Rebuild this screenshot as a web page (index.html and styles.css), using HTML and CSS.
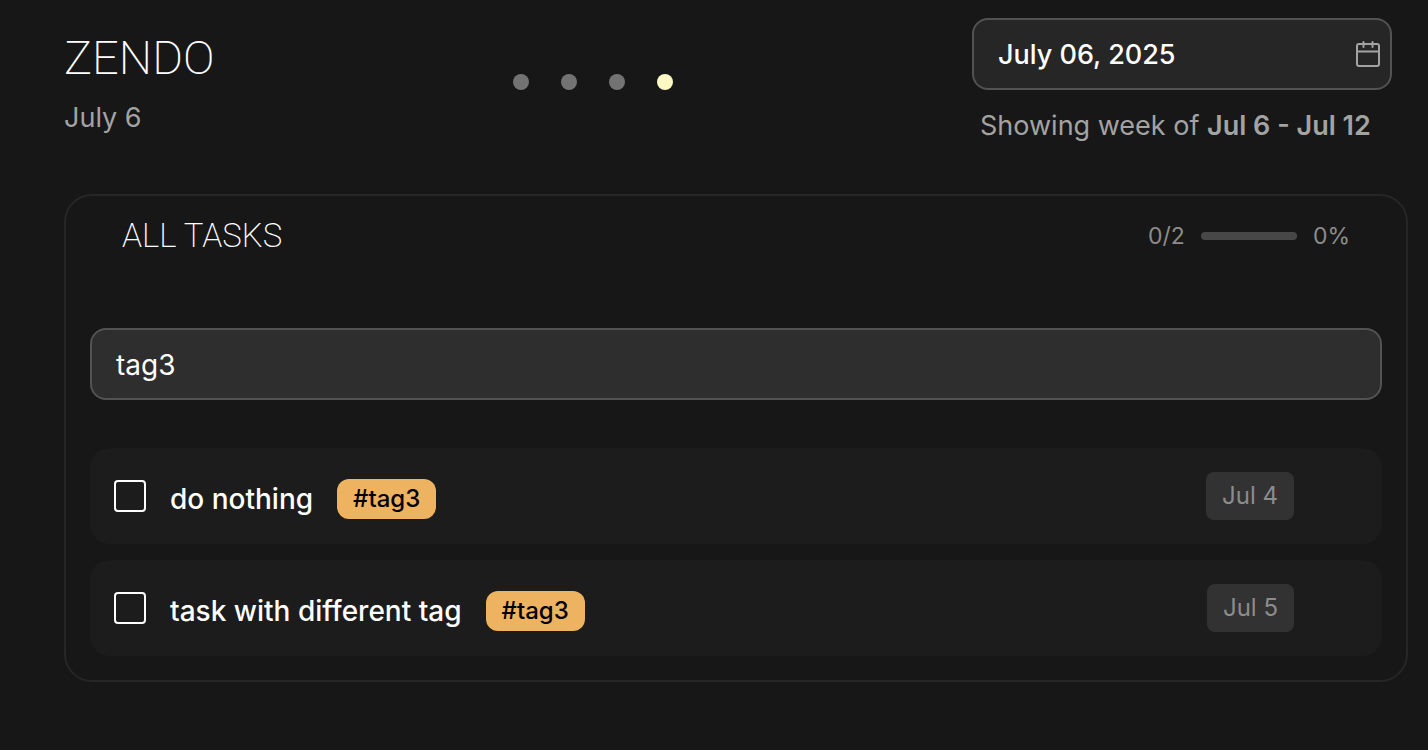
FILE: index.html
```html
<!DOCTYPE html>
<html lang="en">
<head>
<meta charset="utf-8">
<meta name="viewport" content="width=device-width, initial-scale=1">
<title>Zendo</title>
<link rel="stylesheet" href="styles.css">
</head>
<body>
<div class="page">
  <header class="top">
    <div class="brand">
      <h1 class="logo">ZENDO</h1>
      <p class="today">July 6</p>
    </div>
    <nav class="dots" aria-label="Views">
      <button class="dot" type="button" aria-label="View 1"></button>
      <button class="dot" type="button" aria-label="View 2"></button>
      <button class="dot" type="button" aria-label="View 3"></button>
      <button class="dot dot-active" type="button" aria-label="View 4" aria-current="true"></button>
    </nav>
    <div class="week">
      <div class="date-field">
        <input class="date-input" type="text" value="July 06, 2025" aria-label="Date">
        <button class="date-button" type="button" aria-label="Open calendar">
          <svg class="date-icon" viewBox="0 0 24 28" fill="none" stroke="currentColor" stroke-width="2" stroke-linecap="round" stroke-linejoin="round">
            <rect x="1" y="4" width="22" height="22" rx="2"/>
            <path d="M1 11.500h22M7.500 2v5M16.500 2v5"/>
          </svg>
        </button>
      </div>
      <p class="week-label">Showing week of <strong>Jul 6 - Jul 12</strong></p>
    </div>
  </header>

  <main class="card">
    <div class="card-head">
      <h2 class="card-title">ALL TASKS</h2>
      <div class="progress">
        <span>0/2</span>
        <div class="bar" role="progressbar" aria-label="Tasks done" aria-valuenow="0" aria-valuemin="0" aria-valuemax="100"></div>
        <span>0%</span>
      </div>
    </div>
    <input class="search" type="text" value="tag3" aria-label="Search tasks">
    <ul class="tasks">
      <li class="task">
        <input class="check" type="checkbox" id="task-1">
        <div class="task-text">
          <label class="name" for="task-1">do nothing</label>
          <span class="tag">#tag3</span>
        </div>
        <span class="due">Jul 4</span>
      </li>
      <li class="task">
        <input class="check" type="checkbox" id="task-2">
        <div class="task-text">
          <label class="name" for="task-2">task with different tag</label>
          <span class="tag">#tag3</span>
        </div>
        <span class="due">Jul 5</span>
      </li>
    </ul>
  </main>
</div>
</body>
</html>
```

FILE: styles.css
```css
* {
  box-sizing: border-box;
}

body {
  margin: 0;
  background: #171717;
  color: #fff;
  font-family: Inter, "Liberation Sans", sans-serif;
  font-size: 28px;
  line-height: 40px;
}

h1, h2, p, ul {
  margin: 0;
  padding: 0;
}

input, button {
  font: inherit;
  color: inherit;
}

.page {
  padding: 18px 20px 48px 64px;
}

.top {
  display: flex;
  align-items: center;
  justify-content: space-between;
  margin-right: 16px;
  font-size: 27px;
}

.brand {
  display: flex;
  flex-direction: column;
  gap: 12px;
  padding-top: 4px;
}

.logo {
  font-family: Roboto, sans-serif;
  font-size: 47px;
  font-weight: 200;
  line-height: 56px;
}

.today,
.week-label {
  color: #a3a3a3;
}

.dots {
  display: flex;
  gap: 32px;
}

.dot {
  width: 16px;
  height: 16px;
  padding: 0;
  border: 0;
  border-radius: 50%;
  background: #737373;
}

.dot-active {
  background: #fef9c3;
}

.week {
  display: flex;
  flex-direction: column;
  gap: 16px;
  width: 420px;
}

.date-field {
  display: flex;
  align-items: center;
  height: 72px;
  padding: 0 10px 0 24px;
  border: 2px solid #525252;
  border-radius: 16px;
  background: #262626;
}

.date-input {
  flex: 1;
  min-width: 0;
  padding: 2px 0 0;
  border: 0;
  outline: 0;
  background: transparent;
  font-weight: 500;
}

.date-button {
  display: flex;
  padding: 0;
  border: 0;
  background: none;
  color: #a3a3a3;
}

.date-icon {
  width: 24px;
  height: 28px;
}

.week-label {
  padding-left: 8px;
}

.week-label strong {
  font-weight: 600;
}

.card {
  margin-top: 48px;
  padding: 20px 24px 24px;
  border: 2px solid #262626;
  border-radius: 28px;
}

.card-head {
  display: flex;
  align-items: center;
  justify-content: space-between;
  padding: 0 32px;
  margin-bottom: 72px;
}

.card-title {
  font-family: Roboto, sans-serif;
  font-size: 33px;
  font-weight: 200;
  line-height: 40px;
}

.progress {
  display: flex;
  align-items: center;
  gap: 16px;
  color: #8c8c8c;
  font-size: 23px;
}

.bar {
  width: 96px;
  height: 8px;
  border-radius: 4px;
  background: #474747;
}

.search {
  display: block;
  width: 100%;
  height: 72px;
  padding: 2px 24px 0;
  border: 2px solid #525252;
  border-radius: 16px;
  outline: 0;
  background: #2e2e2e;
}

.tasks {
  display: flex;
  flex-direction: column;
  gap: 16px;
  margin-top: 48px;
  list-style: none;
}

.task {
  display: flex;
  align-items: center;
  gap: 24px;
  padding: 24px 88px 24px 24px;
  border-radius: 20px;
  background: #1c1c1c;
}

.check {
  appearance: none;
  width: 32px;
  height: 32px;
  margin: 0;
  border: 2px solid #fff;
  border-radius: 4px;
}

.task-text {
  display: flex;
  align-items: center;
  gap: 24px;
  padding-top: 6px;
}

.name {
  font-weight: 500;
}

.tag {
  padding: 0 16px;
  border-radius: 12px;
  background: #edb361;
  color: #000;
  font-size: 24px;
  font-weight: 500;
}

.due {
  margin-left: auto;
  padding: 4px 16px;
  border-radius: 8px;
  background: #323232;
  color: #8c8c8c;
  font-size: 24px;
}
```
